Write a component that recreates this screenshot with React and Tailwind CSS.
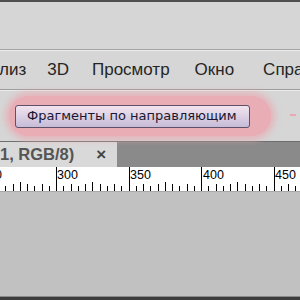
import React from "react";

function Ruler() {
  const ticks = [];
  const origin = 56;
  const step = 7.25;
  for (let i = -8; i <= 34; i++) {
    const x = origin + i * step;
    if (x < -2 || x > 302) continue;
    const mod = ((i % 10) + 10) % 10;
    let y1;
    if (mod === 0) y1 = 0;
    else if (mod === 5) y1 = 15;
    else if (mod % 2 === 0) y1 = 17;
    else y1 = 19;
    ticks.push(<line key={i} x1={Math.round(x) + 0.5} x2={Math.round(x) + 0.5} y1={y1} y2={24} stroke="#000" strokeWidth="1" />);
  }
  return (
    <svg width="300" height="24" className="absolute left-0 top-0">
      {ticks}
    </svg>
  );
}

export default function App() {
  const f = { fontFamily: '"Liberation Sans", Arial, sans-serif' };
  return (
    <div className="w-[300px] h-[300px] overflow-hidden flex flex-col bg-[#d6d6d6]" style={f}>
      <div className="h-[2px] bg-[#505050]" />
      <div className="h-[47px] bg-[#d6d6d6]" />
      <div className="h-[1px] bg-[#a4a4a4]" />
      <div className="h-[1px] bg-[#ececec]" />
      <div className="h-[38px] flex items-center text-[17px] text-[#252525] whitespace-nowrap">
        <span className="ml-[-1px]">лиз</span>
        <span className="ml-[21px]">3D</span>
        <span className="ml-[23px]">Просмотр</span>
        <span className="ml-[25px]">Окно</span>
        <span className="ml-[29px]">Справка</span>
      </div>
      <div className="h-[1px] bg-[#9c9c9c]" />
      <div className="h-[1px] bg-[#ececec]" />
      <div className="h-[50px] relative flex items-center">
        <div className="ml-[9px] w-[262px] h-[40px] rounded-[20px] bg-[#e9adb5] flex items-center pl-[6px] shadow-[0_0_6px_4px_rgba(233,173,181,0.8)]">
          <div className="w-[235px] h-[23px] rounded-[3px] border border-[#5e5068] bg-gradient-to-b from-[#f2e4ee] to-[#c6bcd8] flex items-center pl-[11px] text-[13px] text-[#1a1830] whitespace-nowrap" style={{ fontFamily: '"DejaVu Sans", Verdana, sans-serif' }}>
            Фрагменты по направляющим
          </div>
        </div>
        <div className="absolute left-[290px] top-[23px] w-[6px] h-[2px] bg-[#e9a9b2]" />
      </div>
      <div className="h-[26px] flex bg-[#8a8a8a] border-t border-[#6e6e6e]">
        <div className="w-[117px] bg-[#d9d9d9] flex items-center text-[16.5px] font-bold text-[#555] whitespace-nowrap">
          <span>1, RGB/8)</span>
          <span className="ml-[22px] text-[17px] text-[#444]">×</span>
        </div>
      </div>
      <div className="h-[24px] bg-white relative text-[12.5px] text-black leading-none">
        <Ruler />
        <span className="absolute left-[-19px] top-[2px]">250</span>
        <span className="absolute left-[57px] top-[2px]">300</span>
        <span className="absolute left-[130px] top-[2px]">350</span>
        <span className="absolute left-[203px] top-[2px]">400</span>
        <span className="absolute left-[275px] top-[2px]">450</span>
      </div>
      <div className="h-[1px] bg-[#a8a8a8]" />
      <div className="flex-1 bg-[#c1c1c1]" />
      <div className="h-[1px] bg-[#8a8a8a]" />
      <div className="h-[3px] bg-[#3c3c3c]" />
    </div>
  );
}
